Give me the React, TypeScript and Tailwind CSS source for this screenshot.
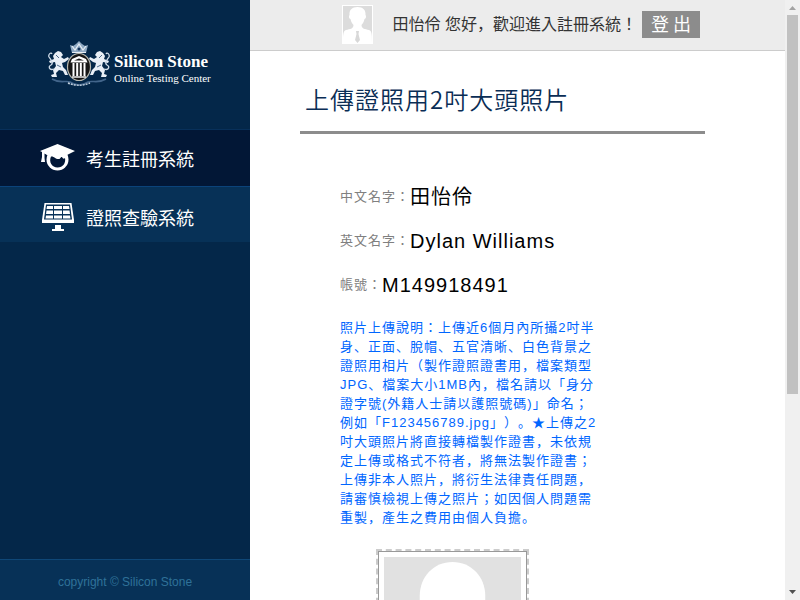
import React from "react";

function Lion() {
  return (
    <g>
      <path d="M7 12 L10 10 L13 11 L15 14 L13 16 L16 18 L20 16 L21 18 L17 21 L14 22 L15 26 L18 29 L20 34 L17 34 L15 30 L11 29 L8 32 L9 36 L4 36 L3 34 L6 33 L5 29 L8 25 L7 21 L2 22 L1 20 L6 18 L5 15 Z" fill="#e9eff6" />
      <path d="M6 28 C1 30 0 25 3 24 C6 22 3 19 1 16 C0 13 3 11 4 13" fill="none" stroke="#cfdbe8" strokeWidth="1.3" />
      <path d="M8 14 L11 17 M9 24 L13 26" stroke="#4f6b8a" strokeWidth="1" />
    </g>
  );
}

function Crest() {
  return (
    <svg className="h-12 w-[62px] shrink-0" viewBox="0 0 62 48" aria-hidden="true">
      <Lion />
      <g transform="translate(62 0) scale(-1 1)">
        <Lion />
      </g>
      <path d="M24 12 L22 4 L25 5 L28 3 L31 0 L34 3 L37 5 L40 4 L38 12 Z" fill="#8fa9c3" />
      <path d="M24 11.500 H38 M24 5 L27 9 L31 3 L35 9 L38 5" stroke="#e8eef5" strokeWidth="1.2" fill="none" />
      <circle cx="31" cy="8" r="1.5" fill="#123258" />
      <ellipse cx="31" cy="26" rx="11.5" ry="13.5" fill="#151515" stroke="#b9b9b0" strokeWidth="1.2" />
      <path d="M22.500 21.500 L24 18 L31 15 L38 18 L39.500 21.500 Z" fill="#fff" />
      <path d="M26 19.500 L31 17.500 L36 19.500 Z" fill="#151515" />
      <path d="M24 36 H38" stroke="#fff" strokeWidth="1.4" />
      <path d="M25.500 22 V35 M29.200 22 V35 M32.800 22 V35 M36.500 22 V35" stroke="#fff" strokeWidth="2" />
      <path d="M4 38 C12 43 18 39 22 41 C28 45 34 45 40 41 C44 39 50 43 58 38" fill="none" stroke="#42658b" strokeWidth="1.6" />
      <path d="M20 42 C27 45 35 45 42 42" fill="none" stroke="#c3d1df" strokeWidth="1.4" strokeDasharray="2 1" />
    </svg>
  );
}

function GraduateIcon() {
  return (
    <svg className="h-7 w-9 shrink-0" viewBox="0 0 36 28" aria-hidden="true">
      <circle cx="17.500" cy="15.500" r="11" fill="#fff" />
      <path d="M0 7 L17.500 0 L35 7 L27 11 H7 L4.500 9.500 V14 L5 18 H1 L2 13 V8 Z" fill="#fff" />
      <path d="M11 12.500 C14 12 15 15 18.500 15 C21 15 20 13 22 13 C23 15 24 15 25 14 C26 19 23 23.500 17.500 23.500 C12 23.500 8.500 18 11 12.500 Z" fill="#021736" />
    </svg>
  );
}

function PanelIcon() {
  return (
    <svg className="h-7 w-9 shrink-0" viewBox="0 0 36 28" aria-hidden="true">
      <path d="M4.500 0 H31.500 L34 17 V20 H2 V17 Z" fill="#fff" />
      <path d="M6 1.500 H30 L32 16.500 H4 Z" fill="#073157" />
      <path d="M7 3 H13 V6 H6.500 Z M14 3 H22 V6 H14 Z M23 3 H29 L29.500 6 H23 Z M6.500 7.500 H13 V11 H6 Z M14 7.500 H22 V11 H14 Z M23 7.500 H29.500 L30 11 H23 Z M6 12.500 H13 V15.500 H5.500 Z M14 12.500 H22 V15.500 H14 Z M23 12.500 H30 L30.500 15.500 H23 Z" fill="#fff" />
      <path d="M15 22 H21 V26 H24 V28 H12 V26 H15 Z" fill="#fff" />
    </svg>
  );
}

function Avatar() {
  return (
    <svg className="h-[39px] w-[31px]" viewBox="0 0 31 39" role="img" aria-label="田怡伶">
      <rect width="31" height="39" fill="#fff" />
      <rect x="1" y="1" width="29" height="37" fill="#dcdcdc" />
      <path d="M15.500 2 C21 2 24 5 23.500 10 C24.500 11 24 14 22.500 14 C22 17 20.500 19 19.500 20 C19.500 24 23 24 27 25 C30 26 30 30 30 38 H1 C1 30 1 26 4 25 C8 24 11.500 24 11.500 20 C10.500 19 9 17 8.500 14 C7 14 6.500 11 7.500 10 C7 5 10 2 15.500 2 Z" fill="#fff" />
      <path d="M14 26 H17 L16.500 29 L18 35 L15.500 38 L13 35 L14.500 29 Z" fill="#d8d8d8" />
    </svg>
  );
}

const navItems = [
  { label: "考生註冊系統", icon: <GraduateIcon />, style: "h-[57px] bg-[#021736] border-[#08305a]" },
  { label: "證照查驗系統", icon: <PanelIcon />, style: "h-[56px] bg-[#073157] border-[#0b437a] pt-1" },
];

const fields = [
  { label: "中文名字：", value: "田怡伶" },
  { label: "英文名字：", value: "Dylan Williams" },
  { label: "帳號：", value: "M149918491" },
];

function Sidebar() {
  return (
    <aside className="flex w-[250px] shrink-0 flex-col bg-[#042749]">
      <div className="flex h-[129px] items-center gap-1 pl-12">
        <Crest />
        <div className="pt-2 font-['Liberation_Serif',serif] text-white">
          <div className="text-[17px] leading-[18px] font-bold">Silicon Stone</div>
          <div className="text-[11px] leading-[14px]">Online Testing Center</div>
        </div>
      </div>
      <nav>
        {navItems.map((item) => (
          <a key={item.label} href="#" className={`flex items-center gap-[10px] border-t pl-10 text-lg text-white ${item.style}`}>
            {item.icon}
            <span className="pt-1">{item.label}</span>
          </a>
        ))}
      </nav>
      <footer className="mt-auto border-t border-[#0f4777] bg-[#073157] pt-[14px] pb-[10px] text-center text-xs text-[#2f7199]">
        copyright © Silicon Stone
      </footer>
    </aside>
  );
}

function Scrollbar() {
  return (
    <div className="flex w-[15px] shrink-0 flex-col items-center bg-[#f0f0f0]" aria-hidden="true">
      <svg className="h-[15px] w-[15px] shrink-0" viewBox="0 0 15 15">
        <path d="M4 10 L7.500 6 L11 10 Z" fill="#a3a3a3" />
      </svg>
      <div className="h-2/3 max-h-[379px] w-[11px] bg-[#c1c1c1]" />
      <svg className="mt-auto h-[15px] w-[15px] shrink-0" viewBox="0 0 15 15">
        <path d="M4 5 L7.500 9 L11 5 Z" fill="#505050" />
      </svg>
    </div>
  );
}

export default function App() {
  return (
    <div className="flex h-screen overflow-hidden bg-white font-['Liberation_Sans','Noto_Sans_CJK_JP',sans-serif] [text-spacing-trim:space-all]">
      <Sidebar />
      <div className="min-w-0 flex-1 overflow-hidden">
        <header className="flex h-[51px] items-center justify-end border-b border-[#ccc] bg-[#ececec] pr-[85px] pb-px">
          <Avatar />
          <span className="ml-5 text-base text-[#333]">田怡伶 您好，歡迎進入註冊系統！</span>
          <button className="ml-[5px] flex h-[27px] w-[58px] items-center justify-center gap-1 bg-[#8c8c8c] text-lg text-white">
            <span>登</span>
            <span>出</span>
          </button>
        </header>
        <main className="pr-20 pl-[50px] tracking-[1px]">
          <h1 className="border-b-[3px] border-[#8c8c8c] pt-[30px] pb-[14px] pl-[5px] font-['Noto_Sans_CJK_JP',sans-serif] text-2xl leading-9 font-[350] text-[#0a2d55]">
            上傳證照用2吋大頭照片
          </h1>
          <div className="pt-[41px] pl-10">
            <dl>
              {fields.map((field) => (
                <div key={field.label} className="flex h-11 items-center text-[13px] text-[#808080]">
                  <dt>{field.label}</dt>
                  <dd className="text-xl text-black">{field.value}</dd>
                </div>
              ))}
            </dl>
            <p className="max-w-[260px] pt-[11px] text-[13px] leading-[19px] text-[#0066ff]">
              照片上傳說明：上傳近6個月內所攝2吋半身、正面、脫帽、五官清晰、白色背景之證照用相片（製作證照證書用，檔案類型JPG、檔案大小1MB內，檔名請以「身分證字號(外籍人士請以護照號碼)」命名；例如「F123456789.jpg」）。★上傳之2吋大頭照片將直接轉檔製作證書，未依規定上傳或格式不符者，將無法製作證書；上傳非本人照片，將衍生法律責任問題，請審慎檢視上傳之照片；如因個人問題需重製，產生之費用由個人負擔。
            </p>
            <div className="mt-[22px] ml-9 w-[153px] border-2 border-dashed border-[#ccc]">
              <div className="border border-[#999] bg-white p-[5px]">
                <svg className="block w-full bg-[#e1e1e1]" viewBox="0 0 138 176" role="img" aria-label="大頭照片">
                  <path d="M69 5 C88 5 102 20 102 39 V50 C102 66 86 80 69 80 C52 80 36 66 36 50 V39 C36 20 50 5 69 5 Z" fill="#fff" />
                  <path d="M54 70 H84 V96 C100 108 132 104 136 130 V176 H2 V130 C6 104 38 108 54 96 Z" fill="#fff" />
                </svg>
              </div>
            </div>
          </div>
        </main>
      </div>
      <Scrollbar />
    </div>
  );
}
